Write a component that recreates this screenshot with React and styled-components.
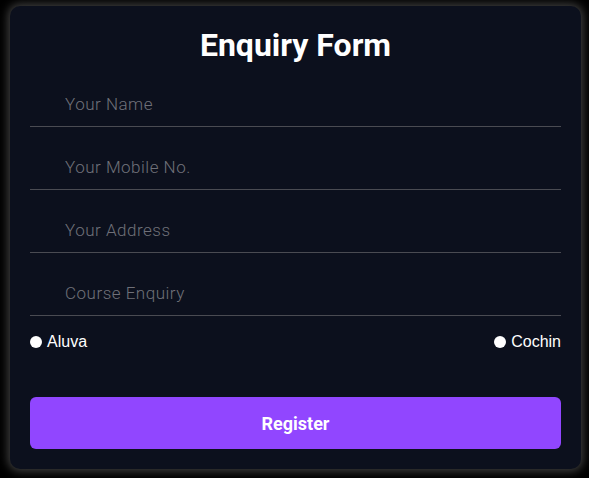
import React from "react";
import styled, { createGlobalStyle } from "styled-components";

const Global = createGlobalStyle`
  html, body { margin: 0; padding: 0; background: #000; }
  * { box-sizing: border-box; }
`;

const Page = styled.div`
  padding: 6px 8px 9px 10px;
  width: 589px;
  height: 478px;
  background: #000;
`;

const Card = styled.form`
  width: 571px;
  height: 463px;
  background: #0c101d;
  border-radius: 10px;
  box-shadow: 0 0 10px 2px rgba(120, 120, 120, 0.55);
  padding: 21px 20px 20px 20px;
  display: flex;
  flex-direction: column;
`;

const Title = styled.h1`
  margin: 0;
  text-align: center;
  color: #fff;
  font-family: Roboto, "Liberation Sans", sans-serif;
  font-weight: 700;
  font-size: 32px;
  line-height: 36px;
`;

const Field = styled.input`
  display: block;
  width: 100%;
  height: 45px;
  margin-top: 18px;
  background: transparent;
  border: none;
  border-bottom: 1px solid #4a4b52;
  outline: none;
  padding: 0 0 1px 35px;
  color: #fff;
  font-family: Roboto, "Liberation Sans", sans-serif;
  font-size: 17px;
  font-weight: 300;
  letter-spacing: 0.5px;
  &::placeholder { color: #6f7079; }
  &:first-of-type { margin-top: 19px; }
`;

const Options = styled.div`
  display: flex;
  justify-content: space-between;
  align-items: center;
  margin-top: 17px;
`;

const Option = styled.label`
  display: flex;
  align-items: center;
  gap: 5px;
  color: #fff;
  font-family: "Liberation Sans", Arial, sans-serif;
  font-size: 16px;
`;

const Radio = styled.input`
  appearance: none;
  margin: 0;
  width: 12px;
  height: 12px;
  border-radius: 50%;
  background: #fff;
`;

const Button = styled.button`
  margin-top: 46px;
  height: 52px;
  width: 100%;
  border: none;
  border-radius: 6px;
  background: #9146ff;
  color: #fff;
  font-family: Roboto, "Liberation Sans", sans-serif;
  font-weight: 700;
  font-size: 18px;
  cursor: pointer;
`;

export default function App() {
  return (
    <>
      <Global />
      <Page>
        <Card onSubmit={(e) => e.preventDefault()}>
          <Title>Enquiry Form</Title>
          <Field placeholder="Your Name" />
          <Field placeholder="Your Mobile No." />
          <Field placeholder="Your Address" />
          <Field placeholder="Course Enquiry" />
          <Options>
            <Option><Radio type="radio" name="loc" />Aluva</Option>
            <Option><Radio type="radio" name="loc" />Cochin</Option>
          </Options>
          <Button type="submit">Register</Button>
        </Card>
      </Page>
    </>
  );
}
